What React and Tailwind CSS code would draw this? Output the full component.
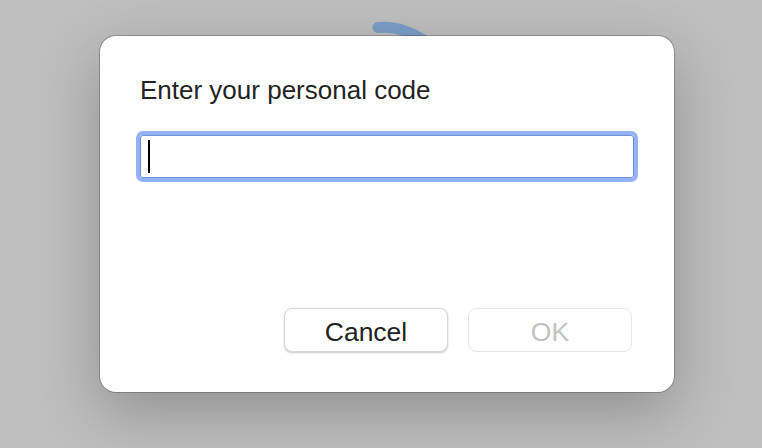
import React from 'react';

const App = () => {
  return (
    <div className="relative w-[762px] h-[448px] overflow-hidden bg-[#bebebe] pt-[36px] pl-[100px] font-['Liberation_Sans',Arial,sans-serif]">
      {/* blue ring peeking out behind the sheet */}
      <svg className="absolute left-[360px] top-[10px]" width="80" height="40" viewBox="0 0 80 40">
        <path d="M18 17.5 Q42 15 66 32" fill="none" stroke="#7b9dc7" strokeWidth="11" strokeLinecap="round" />
      </svg>

      {/* Dialog */}
      <div className="relative w-[574px] h-[356px] rounded-[16px] bg-white flex flex-col pt-[39px] pl-[40px] pr-[40px] pb-[40px] shadow-[0_0_0_1px_rgba(0,0,0,0.22),0_20px_60px_rgba(0,0,0,0.24)]">
        <h1 className="text-[26px] leading-[30px] text-[#232323]">Enter your personal code</h1>

        <div className="mt-[30px] h-[43px] rounded-[3px] border border-[#6f90d8] shadow-[0_0_0_4px_#93b3f6] flex items-center pl-[7px]">
          <div className="w-[2px] h-[33px] bg-black" />
        </div>

        <div className="mt-auto flex justify-end gap-[20px] pr-[2px]">
          <button className="w-[164px] h-[44px] pt-[3px] rounded-[8px] bg-white border border-[#d8d8d8] shadow-[0_1px_2px_rgba(0,0,0,0.22)] text-[26.5px] leading-[30px] text-[#222]">
            Cancel
          </button>
          <button className="w-[164px] h-[44px] pt-[3px] rounded-[8px] bg-white border border-[#e6e6e6] text-[26.5px] leading-[30px] text-[#c2c2c2]">
            OK
          </button>
        </div>
      </div>
    </div>
  );
};

export default App;
